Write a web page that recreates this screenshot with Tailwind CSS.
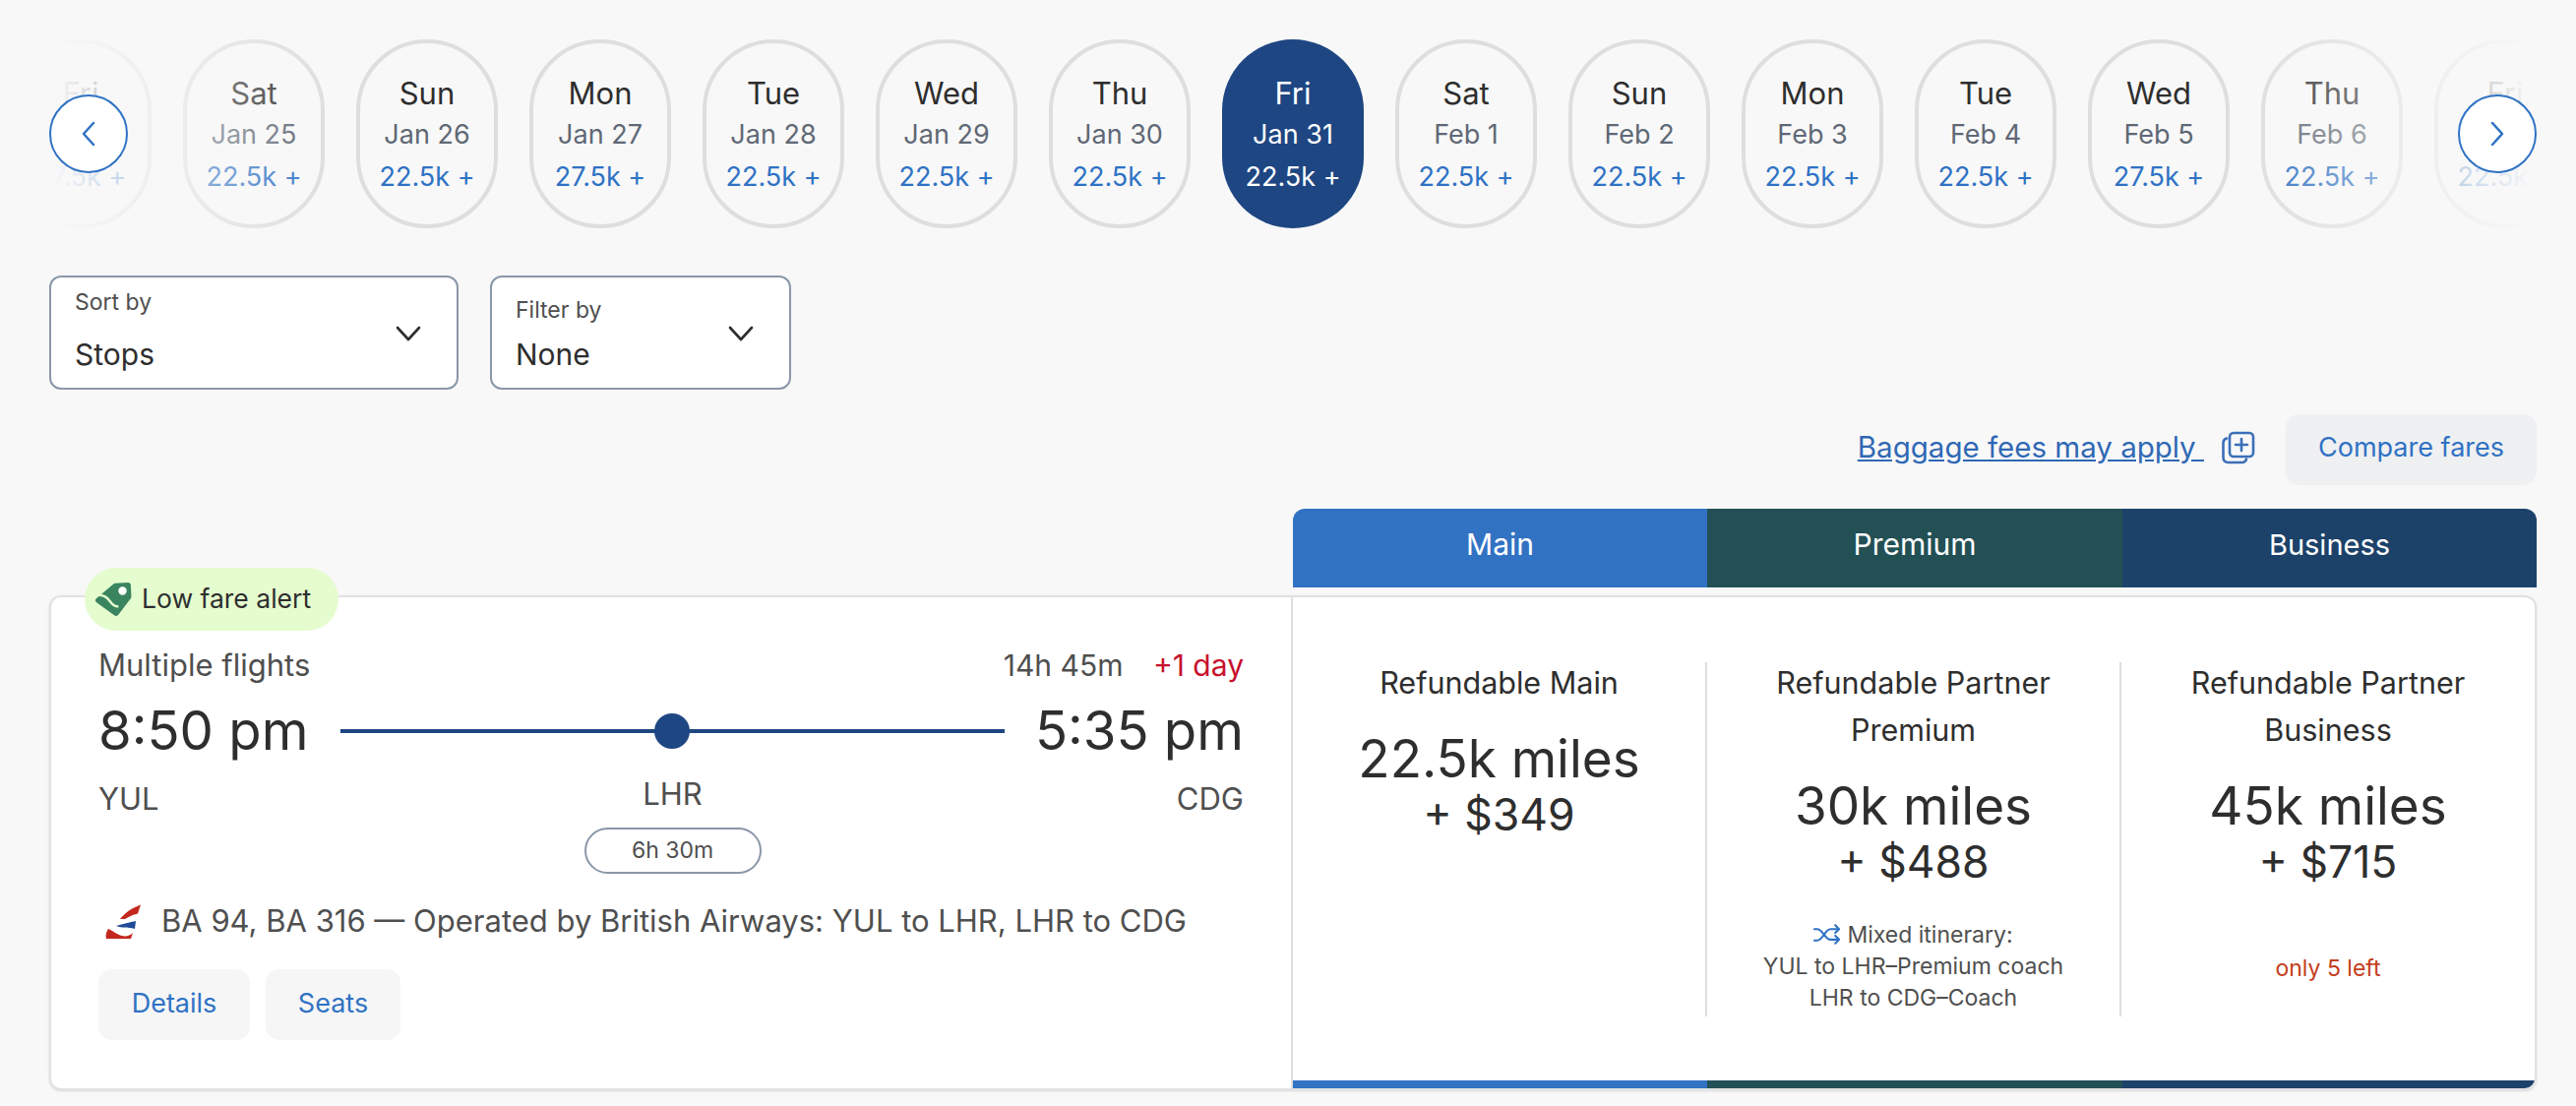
<!DOCTYPE html>
<html lang="en">
  <head>
    <meta charset="UTF-8" />
    <title>Flight results</title>
    <script src="https://cdn.jsdelivr.net/npm/@tailwindcss/browser@4"></script>
  </head>
  <body class="w-[2618px] h-[1124px] overflow-hidden bg-[#f8f8f8] font-[Inter,sans-serif] text-[#2e2e2e]">
    <!-- Date strip -->
    <section class="relative h-[232px] pt-[40px] overflow-hidden">
      <div class="flex gap-[32px] ml-[10px] w-[2700px]">
        <div class="w-[144px] h-[192px] pt-[3px] shrink-0 rounded-full border-4 border-[#dedede] flex flex-col items-center justify-center"><span class="text-[31px] leading-[42px]">Fri</span><span class="text-[27px] leading-[42px] text-[#5f6875]">Jan 24</span><span class="text-[27px] leading-[44px] text-[#2f72c4]">27.5k +</span></div>
        <div class="w-[144px] h-[192px] pt-[3px] shrink-0 rounded-full border-4 border-[#dedede] flex flex-col items-center justify-center"><span class="text-[31px] leading-[42px]">Sat</span><span class="text-[27px] leading-[42px] text-[#5f6875]">Jan 25</span><span class="text-[27px] leading-[44px] text-[#2f72c4]">22.5k +</span></div>
        <div class="w-[144px] h-[192px] pt-[3px] shrink-0 rounded-full border-4 border-[#dedede] flex flex-col items-center justify-center"><span class="text-[31px] leading-[42px]">Sun</span><span class="text-[27px] leading-[42px] text-[#5f6875]">Jan 26</span><span class="text-[27px] leading-[44px] text-[#2f72c4]">22.5k +</span></div>
        <div class="w-[144px] h-[192px] pt-[3px] shrink-0 rounded-full border-4 border-[#dedede] flex flex-col items-center justify-center"><span class="text-[31px] leading-[42px]">Mon</span><span class="text-[27px] leading-[42px] text-[#5f6875]">Jan 27</span><span class="text-[27px] leading-[44px] text-[#2f72c4]">27.5k +</span></div>
        <div class="w-[144px] h-[192px] pt-[3px] shrink-0 rounded-full border-4 border-[#dedede] flex flex-col items-center justify-center"><span class="text-[31px] leading-[42px]">Tue</span><span class="text-[27px] leading-[42px] text-[#5f6875]">Jan 28</span><span class="text-[27px] leading-[44px] text-[#2f72c4]">22.5k +</span></div>
        <div class="w-[144px] h-[192px] pt-[3px] shrink-0 rounded-full border-4 border-[#dedede] flex flex-col items-center justify-center"><span class="text-[31px] leading-[42px]">Wed</span><span class="text-[27px] leading-[42px] text-[#5f6875]">Jan 29</span><span class="text-[27px] leading-[44px] text-[#2f72c4]">22.5k +</span></div>
        <div class="w-[144px] h-[192px] pt-[3px] shrink-0 rounded-full border-4 border-[#dedede] flex flex-col items-center justify-center"><span class="text-[31px] leading-[42px]">Thu</span><span class="text-[27px] leading-[42px] text-[#5f6875]">Jan 30</span><span class="text-[27px] leading-[44px] text-[#2f72c4]">22.5k +</span></div>
        <div class="w-[144px] h-[192px] pt-[3px] shrink-0 rounded-full bg-[#1e4682] text-white flex flex-col items-center justify-center"><span class="text-[31px] leading-[42px]">Fri</span><span class="text-[27px] leading-[42px]">Jan 31</span><span class="text-[27px] leading-[44px]">22.5k +</span></div>
        <div class="w-[144px] h-[192px] pt-[3px] shrink-0 rounded-full border-4 border-[#dedede] flex flex-col items-center justify-center"><span class="text-[31px] leading-[42px]">Sat</span><span class="text-[27px] leading-[42px] text-[#5f6875]">Feb 1</span><span class="text-[27px] leading-[44px] text-[#2f72c4]">22.5k +</span></div>
        <div class="w-[144px] h-[192px] pt-[3px] shrink-0 rounded-full border-4 border-[#dedede] flex flex-col items-center justify-center"><span class="text-[31px] leading-[42px]">Sun</span><span class="text-[27px] leading-[42px] text-[#5f6875]">Feb 2</span><span class="text-[27px] leading-[44px] text-[#2f72c4]">22.5k +</span></div>
        <div class="w-[144px] h-[192px] pt-[3px] shrink-0 rounded-full border-4 border-[#dedede] flex flex-col items-center justify-center"><span class="text-[31px] leading-[42px]">Mon</span><span class="text-[27px] leading-[42px] text-[#5f6875]">Feb 3</span><span class="text-[27px] leading-[44px] text-[#2f72c4]">22.5k +</span></div>
        <div class="w-[144px] h-[192px] pt-[3px] shrink-0 rounded-full border-4 border-[#dedede] flex flex-col items-center justify-center"><span class="text-[31px] leading-[42px]">Tue</span><span class="text-[27px] leading-[42px] text-[#5f6875]">Feb 4</span><span class="text-[27px] leading-[44px] text-[#2f72c4]">22.5k +</span></div>
        <div class="w-[144px] h-[192px] pt-[3px] shrink-0 rounded-full border-4 border-[#dedede] flex flex-col items-center justify-center"><span class="text-[31px] leading-[42px]">Wed</span><span class="text-[27px] leading-[42px] text-[#5f6875]">Feb 5</span><span class="text-[27px] leading-[44px] text-[#2f72c4]">27.5k +</span></div>
        <div class="w-[144px] h-[192px] pt-[3px] shrink-0 rounded-full border-4 border-[#dedede] flex flex-col items-center justify-center"><span class="text-[31px] leading-[42px]">Thu</span><span class="text-[27px] leading-[42px] text-[#5f6875]">Feb 6</span><span class="text-[27px] leading-[44px] text-[#2f72c4]">22.5k +</span></div>
        <div class="w-[144px] h-[192px] pt-[3px] shrink-0 rounded-full border-4 border-[#dedede] flex flex-col items-center justify-center"><span class="text-[31px] leading-[42px]">Fri</span><span class="text-[27px] leading-[42px] text-[#5f6875]">Feb 7</span><span class="text-[27px] leading-[44px] text-[#2f72c4]">22.5k +</span></div>
      </div>
      <!-- Edge fades and arrows -->
      <div class="absolute left-0 top-0 bottom-0 w-[340px] bg-gradient-to-r from-[#f8f8f8] from-[15%] to-[#f8f8f8]/0"></div>
      <div class="absolute right-0 top-0 bottom-0 w-[340px] bg-gradient-to-l from-[#f8f8f8] from-[12%] to-[#f8f8f8]/0"></div>
      <button class="absolute left-[50px] top-[96px] w-[80px] h-[80px] rounded-full bg-white border-2 border-[#2f72c4] flex items-center justify-center">
        <svg width="18" height="28" viewBox="0 0 18 28" fill="none" stroke="#2f72c4" stroke-width="2.5" stroke-linecap="round" stroke-linejoin="round"><path d="M14 3 4 14l10 11" /></svg>
      </button>
      <button class="absolute left-[2498px] top-[96px] w-[80px] h-[80px] rounded-full bg-white border-2 border-[#2f72c4] flex items-center justify-center">
        <svg width="18" height="28" viewBox="0 0 18 28" fill="none" stroke="#2f72c4" stroke-width="2.5" stroke-linecap="round" stroke-linejoin="round"><path d="m4 3 10 11L4 25" /></svg>
      </button>
    </section>

    <!-- Sort and filter -->
    <section class="flex gap-[32px] ml-[50px] mt-[48px]">
      <div class="w-[416px] h-[116px] rounded-[12px] border-2 border-[#8a97a8] bg-white pl-[24px] pr-[36px] flex items-center justify-between">
        <div class="flex flex-col">
          <span class="text-[23px] leading-[30px] text-[#4f4f4f] -mt-[5px]">Sort by</span>
          <span class="text-[30px] leading-[40px] mt-[18px]">Stops</span>
        </div>
        <svg class="mt-[2px]" width="26" height="16" viewBox="0 0 26 16" fill="none" stroke="#2e2e2e" stroke-width="2.6" stroke-linecap="round" stroke-linejoin="round"><path d="m2 2 11 12L24 2" /></svg>
      </div>
      <div class="w-[306px] h-[116px] rounded-[12px] border-2 border-[#8a97a8] bg-white pl-[24px] pr-[36px] flex items-center justify-between">
        <div class="flex flex-col">
          <span class="text-[23px] leading-[30px] text-[#4f4f4f] mt-[3px]">Filter by</span>
          <span class="text-[30px] leading-[40px] mt-[10px]">None</span>
        </div>
        <svg class="mt-[2px]" width="26" height="16" viewBox="0 0 26 16" fill="none" stroke="#2e2e2e" stroke-width="2.6" stroke-linecap="round" stroke-linejoin="round"><path d="m2 2 11 12L24 2" /></svg>
      </div>
    </section>

    <!-- Baggage note and compare -->
    <section class="flex justify-end items-center h-[72px] mt-[25px] mr-[40px]">
      <a class="text-[29.500px] text-[#2f68b4] underline whitespace-pre -mt-[6px]">Baggage fees may apply </a>
      <svg class="ml-[17px] -mt-[4px]" width="36" height="36" viewBox="16 9 36 36" fill="none" stroke="#3b6fb8" stroke-width="2.6" stroke-linecap="round" stroke-linejoin="round">
        <rect x="25" y="12" width="24" height="24" rx="4" />
        <path d="M37 18v12M31 24h12" />
        <path d="M22 17.500c-2 .5-3.500 2-3.500 4.500v15c0 3 2 5 5 5h14c2.500 0 4-1.500 4.500-3.500" />
      </svg>
      <button class="ml-[30px] w-[255px] h-[72px] pb-[3px] rounded-[14px] bg-[#eff0f2] text-[27px] text-[#2f72c4]">Compare fares</button>
    </section>

    <!-- Cabin tabs -->
    <section class="grid grid-cols-[421px_422px_1fr] w-[1264px] h-[80px] ml-[1314px] mt-[24px] rounded-t-[12px] overflow-hidden text-[30px] text-white">
      <div class="bg-[#3272c3] flex items-center justify-center pb-[7px]">Main</div>
      <div class="bg-[#225055] flex items-center justify-center pb-[7px]">Premium</div>
      <div class="bg-[#1c426a] flex items-center justify-center pb-[7px] text-[29px]">Business</div>
    </section>

    <!-- Result card -->
    <section class="relative flex w-[2528px] h-[503px] ml-[50px] mt-[8px] rounded-[12px] border-2 border-[#e2e2e2] bg-white shadow-sm">
      <div class="absolute left-[34px] -top-[30px] h-[64px] w-[258px] rounded-full bg-[#e5fccf] flex items-center pl-[10px]">
        <svg width="38" height="38" viewBox="8 10 36 34">
          <path d="M28 11.500 40 11a3 3 0 0 1 3 3l.5 10.500a3 3 0 0 1-.8 2L31 42a3 3 0 0 1-4 .5L10 30a2.500 2.500 0 0 1-.5-3.500L25.500 13a4 4 0 0 1 2.500-1.500z" fill="#3a8560" />
          <path d="M12 23c6 0 9 3 11 6s4 5 8 5" fill="none" stroke="#e5fccf" stroke-width="2.500" />
          <circle cx="35" cy="19" r="4" fill="#fff" />
        </svg>
        <span class="ml-[10px] text-[26.500px] text-[#2e2e2e]">Low fare alert</span>
      </div>

      <!-- Itinerary -->
      <div class="w-[1262px] h-full border-r-2 border-[#dedede] pl-[48px] pr-[48px] pt-[49px] shrink-0">
        <div class="flex justify-between items-center h-[40px] text-[31px] text-[#4f4f4f]">
          <span>Multiple flights</span>
          <span class="text-[30px]">14h 45m <span class="ml-[22px] text-[#c8102e]">+1 day</span></span>
        </div>
        <div class="flex items-center justify-between h-[94px] text-[54.500px]">
          <span>8:50 pm</span>
          <div class="relative ml-[1px] w-[675px] h-[4px] bg-[#1e4682] flex justify-center items-center">
            <span class="w-[36px] h-[36px] rounded-full bg-[#1e4682]"></span>
          </div>
          <span>5:35 pm</span>
        </div>
        <div class="grid grid-cols-[1fr_auto_1fr] items-start h-[100px] text-[31px] text-[#4f4f4f]">
          <span class="-mt-[1px]">YUL</span>
          <div class="flex flex-col items-center ml-[3px]">
            <span class="-mt-[3px] leading-[40px]">LHR</span>
            <span class="mt-[14px] w-[180px] h-[47px] rounded-full border-2 border-[#8a97a8] text-[23px] flex items-center justify-center">6h 30m</span>
          </div>
          <span class="-mt-[1px] text-right">CDG</span>
        </div>
        <div class="flex items-center h-[38px] mt-[27px] ml-[5px] text-[31px] text-[#4f4f4f]">
          <svg width="40" height="38" viewBox="15 11 40 38">
            <path d="M44 11 15 48h37z" fill="#fff" />
            <path d="M53 13.500C43 17 37 22 32 28l5 0c5-3 10-5 13-5.500z" fill="#c3281f" />
            <path d="M28 35c7-2 14-4 20-5l-1 8c-4-1-7-1.500-10-1.500-3 0-6 0-9-1.500z" fill="#1f4b99" />
            <path d="M20 38c5 2 9 6 14 7 4 1 8 0 11-3l-2 6H18c-1-4 0-7 2-10z" fill="#c3281f" />
          </svg>
          <span class="ml-[19px]">BA 94, BA 316 — Operated by British Airways: YUL to LHR, LHR to CDG</span>
        </div>
        <div class="flex gap-[16px] mt-[30px] text-[27px] text-[#2f72c4]">
          <button class="w-[154px] h-[72px] pb-[2px] rounded-[14px] bg-[#f6f6f6]">Details</button>
          <button class="w-[137px] h-[72px] pb-[2px] rounded-[14px] bg-[#f6f6f6]">Seats</button>
        </div>
      </div>

      <!-- Fare columns -->
      <div class="flex-1 flex flex-col rounded-r-[10px] overflow-hidden">
        <div class="flex-1 pt-[66px] grid grid-cols-[419px_421px_1fr] text-center">
          <div class="h-[360px]">
            <p class="-mt-[3px] text-[30.500px] leading-[48px]">Refundable Main</p>
            <p class="mt-[24px] text-[53px] leading-[58px]">22.5k miles</p>
            <p class="text-[44.500px] leading-[56px]">+ $349</p>
          </div>
          <div class="h-[360px] border-l-2 border-[#dedede]">
            <p class="-mt-[3px] text-[30.500px] leading-[48px]">Refundable Partner<br />Premium</p>
            <p class="mt-[24px] text-[53px] leading-[58px]">30k miles</p>
            <p class="text-[44.500px] leading-[56px]">+ $488</p>
            <div class="mt-[30px] text-[23px] leading-[32px] text-[#4f4f4f]">
              <p class="flex items-center justify-center">
                <svg class="mr-[6px]" width="28" height="22" viewBox="9 11 29 22" fill="none" stroke="#2f72c4" stroke-width="2.200" stroke-linecap="round" stroke-linejoin="round">
                  <path d="M10 16h3c6 0 8 11 14 11h8M10 28h3c6 0 8-12 14-12h8" />
                  <path d="m32 12 4 4-4 4M32 23l4 4-4 4" />
                </svg>
                Mixed itinerary:
              </p>
              <p>YUL to LHR–Premium coach</p>
              <p>LHR to CDG–Coach</p>
            </div>
          </div>
          <div class="h-[360px] border-l-2 border-[#dedede]">
            <p class="-mt-[3px] text-[30.500px] leading-[48px]">Refundable Partner<br />Business</p>
            <p class="mt-[24px] text-[53px] leading-[58px]">45k miles</p>
            <p class="text-[44.500px] leading-[56px]">+ $715</p>
            <p class="mt-[64px] text-[23px] leading-[32px] text-[#c43e1c]">only 5 left</p>
          </div>
        </div>
        <div class="grid grid-cols-[421px_422px_1fr] h-[8px]">
          <div class="bg-[#3272c3]"></div>
          <div class="bg-[#225055]"></div>
          <div class="bg-[#1c426a]"></div>
        </div>
      </div>
    </section>
  </body>
</html>
